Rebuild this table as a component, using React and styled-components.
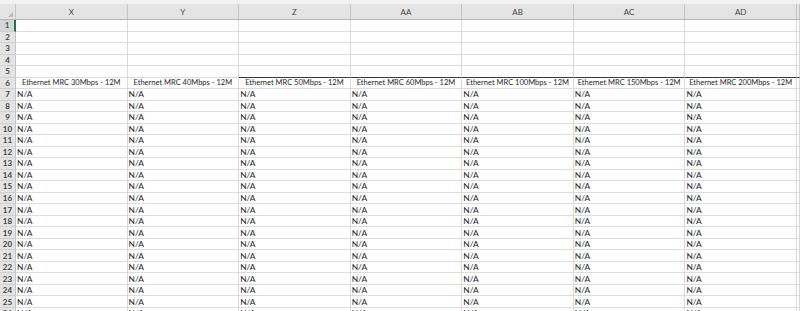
import React from "react";
import styled, { createGlobalStyle } from "styled-components";

const COLS = ["X", "Y", "Z", "AA", "AB", "AC", "AD"];
const HEADINGS = [
  "Ethernet MRC 30Mbps - 12M",
  "Ethernet MRC 40Mbps - 12M",
  "Ethernet MRC 50Mbps - 12M",
  "Ethernet MRC 60Mbps - 12M",
  "Ethernet MRC 100Mbps - 12M",
  "Ethernet MRC 150Mbps - 12M",
  "Ethernet MRC 200Mbps - 12M",
];
// columns Z..AD carry a dark top border on the heading row
const DARK_FROM = 2;
const ROW_H = 11.52;

const GlobalStyle = createGlobalStyle`
  html, body {
    margin: 0;
    padding: 0;
    background: #ffffff;
    overflow: hidden;
  }
  body {
    font-family: Lato, "Liberation Sans", Arial, sans-serif;
  }
`;

const Sheet = styled.div`
  width: 800px;
  height: 311px;
  overflow: hidden;
  background: #ffffff;
`;

const TopStrip = styled.div`
  height: 4px;
  background: #f1f1f1;
`;

const Row = styled.div`
  display: grid;
  grid-template-columns: 16px repeat(7, 111.57px) 1fr;
  height: ${(p) => p.$h}px;
`;

const Corner = styled.div`
  background: #e4e4e4;
  border-right: 1px solid #c8c8c8;
  border-bottom: 1px solid #b4b4b4;
  position: relative;

  &::after {
    content: "";
    position: absolute;
    right: 2px;
    bottom: 2px;
    border-left: 5px solid transparent;
    border-bottom: 5px solid #b9b9b9;
  }
`;

const ColHead = styled.div`
  background: #e4e4e4;
  border-right: 1px solid #c4c4c4;
  border-bottom: 1px solid #b4b4b4;
  display: flex;
  align-items: center;
  justify-content: center;
  font-size: 8px;
  color: #444444;
  padding-top: 1px;
`;

const RowHead = styled.div`
  background: ${(p) => (p.$active ? "#d6d6d6" : "#e4e4e4")};
  color: ${(p) => (p.$active ? "#217346" : "#444444")};
  border-right: ${(p) => (p.$active ? "2px solid #217346" : "1px solid #c4c4c4")};
  border-bottom: 1px solid #d0d0d0;
  display: flex;
  align-items: center;
  justify-content: center;
  font-size: 8px;
  font-weight: 700;
  box-sizing: border-box;
`;

const Cell = styled.div`
  border-right: 1px solid #d9d9d9;
  border-bottom: 1px solid #dcdcdc;
  border-top: ${(p) => (p.$dark ? "1px solid #3a3a3a" : "none")};
  display: flex;
  align-items: center;
  justify-content: ${(p) => (p.$center ? "center" : "flex-start")};
  padding-left: ${(p) => (p.$center ? 0 : 1)}px;
  font-size: ${(p) => (p.$center ? 7.5 : 8.4)}px;
  color: #1e1e1e;
  white-space: nowrap;
  overflow: hidden;
  box-sizing: border-box;
  margin-top: ${(p) => (p.$dark ? -1 : 0)}px;
`;

export default function App() {
  const rows = [];
  for (let r = 1; r <= 26; r++) rows.push(r);

  return (
    <>
      <GlobalStyle />
      <Sheet>
        <TopStrip />
        <Row $h={16}>
          <Corner />
          {COLS.map((c) => (
            <ColHead key={c}>{c}</ColHead>
          ))}
          <ColHead />
        </Row>
        {rows.map((r) => (
          <Row key={r} $h={ROW_H}>
            <RowHead $active={r === 1}>{r}</RowHead>
            {COLS.map((c, i) => {
              if (r === 6) {
                return (
                  <Cell key={c} $center $dark={i >= DARK_FROM}>
                    {HEADINGS[i]}
                  </Cell>
                );
              }
              return <Cell key={c}>{r > 6 ? "N/A" : ""}</Cell>;
            })}
            <Cell $dark={r === 6} />
          </Row>
        ))}
      </Sheet>
    </>
  );
}
